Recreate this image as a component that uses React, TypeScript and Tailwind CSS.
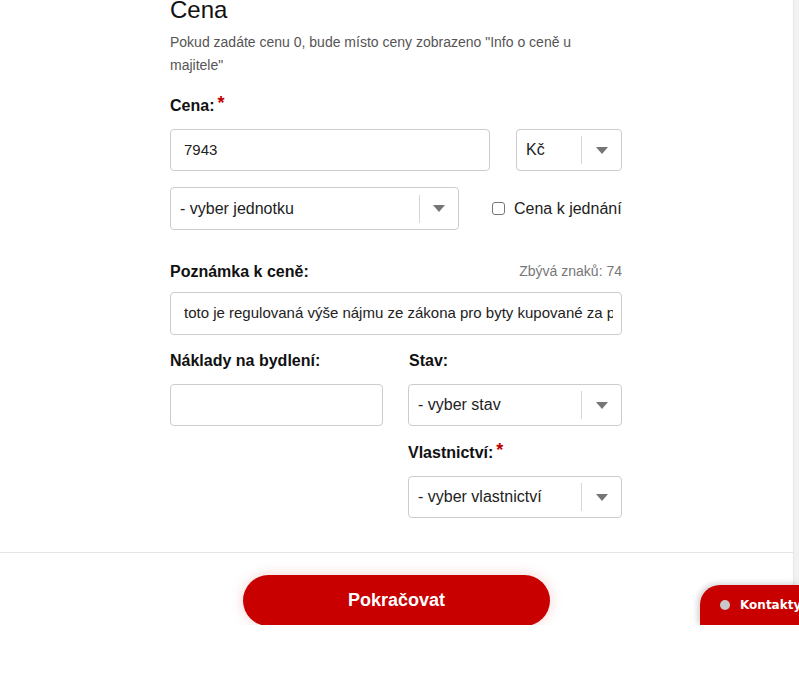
import React from 'react';

const font = { fontFamily: '"Liberation Sans", Arial, sans-serif' };

function Arrow() {
  return (
    <svg width="12" height="7" viewBox="0 0 12 7" className="block">
      <path d="M0 0 L12 0 L6 7 Z" fill="#757575" />
    </svg>
  );
}

function Select({ label, className, dividerAt }: { label: string; className: string; dividerAt: string }) {
  return (
    <div className={`flex items-center rounded-[4px] border border-[#cccccc] bg-white ${className}`}>
      <span className={`pl-[9px] text-[16px] text-[#222] ${dividerAt}`}>{label}</span>
      <span className="h-[28px] w-px bg-[#d6d6d6]" />
      <span className="flex flex-1 justify-center">
        <Arrow />
      </span>
    </div>
  );
}

function Label({ text, required }: { text: string; required?: boolean }) {
  return (
    <div className="flex h-[23px] items-center text-[16px] leading-[23px] font-bold text-[#111]">
      <span>{text}</span>
      {required && <span className="ml-[3px] -mt-[6px] text-[18px] leading-[16px] text-[#c00000]">*</span>}
    </div>
  );
}

export default function App() {
  return (
    <div className="h-[692px] w-[799px] bg-white" style={font}>
      <div className="relative flex h-[625px] overflow-hidden">
        <div className="w-[793px] bg-white">
          <div className="ml-[170px] w-[452px]">
            <h2 className="-mt-[5px] text-[24px] leading-[29px] text-[#111]">Cena</h2>
            <p className="mt-[7px] max-w-[420px] text-[14px] leading-[23px] text-[#555]">
              Pokud zadáte cenu 0, bude místo ceny zobrazeno "Info o ceně u majitele"
            </p>

            <div className="mt-[17px]">
              <Label text="Cena:" required />
            </div>

            <div className="mt-[12px] flex justify-between">
              <div className="flex h-[42px] w-[320px] items-center rounded-[4px] border border-[#cccccc] px-[13px] text-[15px] text-[#222]">
                7943
              </div>
              <Select label="Kč" className="h-[42px] w-[106px]" dividerAt="w-[64px]" />
            </div>

            <div className="mt-[16px] flex items-center">
              <Select label="- vyber jednotku" className="h-[43px] w-[289px]" dividerAt="w-[248px]" />
              <label className="ml-[33px] flex items-center whitespace-nowrap text-[16px] text-[#222]">
                <span className="h-[13px] w-[13px] rounded-[3px] border border-[#767676] bg-white" />
                <span className="ml-[9px]">Cena k jednání</span>
              </label>
            </div>

            <div className="mt-[30px] flex items-center justify-between">
              <Label text="Poznámka k ceně:" />
              <span className="text-[14px] text-[#777]">Zbývá znaků: 74</span>
            </div>

            <div className="mt-[9px] flex h-[43px] items-center overflow-hidden whitespace-nowrap rounded-[4px] border border-[#cccccc] pl-[13px] pr-[8px] text-[15px] text-[#222]">
              <span className="overflow-hidden">toto je regulovaná výše nájmu ze zákona pro byty kupované za p</span>
            </div>

            <div className="mt-[14px] flex justify-between">
              <div className="w-[213px]">
                <Label text="Náklady na bydlení:" />
                <div className="mt-[12px] h-[42px] rounded-[4px] border border-[#cccccc]" />
              </div>
              <div className="w-[214px]">
                <div className="pl-[1px]">
                  <Label text="Stav:" />
                </div>
                <Select label="- vyber stav" className="mt-[12px] h-[42px] w-full" dividerAt="w-[172px]" />
                <div className="mt-[15px]">
                  <Label text="Vlastnictví:" required />
                </div>
                <Select label="- vyber vlastnictví" className="mt-[12px] h-[42px] w-full" dividerAt="w-[172px]" />
              </div>
            </div>
          </div>

          <div className="mt-[34px] border-t border-[#e5e5e5]">
            <div className="flex justify-center pt-[22px]">
              <button className="h-[51px] w-[307px] rounded-full bg-[#c80000] text-[18px] font-bold text-white shadow-[0_0_14px_rgba(200,0,0,0.18)]">
                Pokračovat
              </button>
            </div>
          </div>
        </div>

        <div className="w-[6px] border-l border-[#e6e6e6] bg-[#f1f1f1]" />

        <div
          className="absolute bottom-0 right-0 flex h-[40px] w-[99px] items-center rounded-tl-[20px] bg-[#c80000] pl-[20px] shadow-[-2px_-1px_6px_rgba(0,0,0,0.2)]"
          style={{ fontFamily: '"DejaVu Sans", Verdana, sans-serif' }}
        >
          <span className="h-[10px] w-[10px] shrink-0 rounded-full bg-[#c8c8c8]" />
          <span className="ml-[10px] whitespace-nowrap text-[12px] font-bold text-white">Kontakty</span>
        </div>
      </div>
    </div>
  );
}
